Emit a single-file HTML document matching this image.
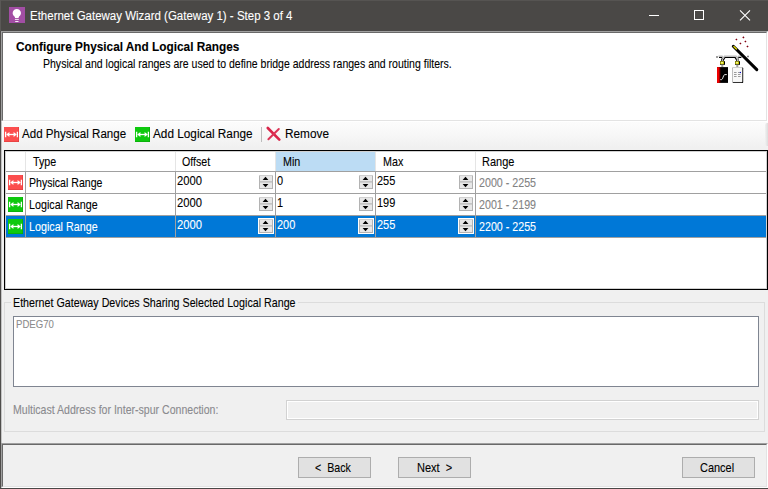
<!DOCTYPE html>
<html lang="en">
<head>
<meta charset="utf-8">
<title>Ethernet Gateway Wizard (Gateway 1) - Step 3 of 4</title>
<style>
html,body{margin:0;padding:0;overflow:hidden;}
body{width:768px;height:489px;overflow:hidden;background:#f0f0f0;position:relative;
  font-family:"Liberation Sans",sans-serif;font-size:11px;color:#000;}
.a{position:absolute;white-space:pre;line-height:1;}
.t{transform-origin:0 0;-webkit-text-stroke:0.1px currentColor;}
.b{position:absolute;box-sizing:border-box;}
.btn{background:#e1e1e1;border:1px solid #adadad;width:73px;height:21px;top:457px;}
</style>
</head>
<body>
<div class="b" style="left:0;top:0;width:768px;height:31px;background:#4a4846"></div>
<div class="b" style="left:0;top:0;width:768px;height:1px;background:#565452"></div>
<div class="b" style="left:0;top:0;width:1px;height:31px;background:#5a5856"></div>
<div class="b" style="left:0;top:31px;width:1px;height:458px;background:#4f4d4b"></div>
<div class="b" style="left:1px;top:31px;width:1px;height:457px;background:#c4c4c4"></div>
<div class="b" style="left:0;top:488px;width:768px;height:1px;background:#4a4846"></div>
<svg class="a" style="left:9px;top:7px" width="16" height="16" viewBox="0 0 16 16">
<rect width="16" height="16" fill="#a24ea4"/>
<path d="M7.800 1.900a4.100 4.100 0 0 0-2.300 7.500c.4.400.5.900.5 1.500h3.600c0-.6.100-1.100.5-1.500A4.100 4.100 0 0 0 7.800 1.900z" fill="#fff"/>
<rect x="5.900" y="11.900" width="3.900" height="0.900" fill="#fff"/>
<rect x="6.200" y="14" width="3.300" height="0.900" fill="#fff"/>
</svg>
<svg class="a" style="left:640px;top:0" width="128" height="31" viewBox="0 0 128 31">
<path d="M9 15.500h10" stroke="#fff" stroke-width="1" fill="none"/>
<rect x="54.500" y="10.500" width="9" height="9" stroke="#fff" stroke-width="1" fill="none"/>
<path d="M100 10.300l10 10M110 10.300l-10 10" stroke="#fff" stroke-width="1.100" fill="none"/>
</svg>
<div class="b" style="left:1px;top:31px;width:767px;height:91px;background:#fff;border-style:solid;border-width:1px;border-color:#a0a0a0 #fff #fff #a0a0a0"></div>
<div class="b" style="left:2px;top:32px;width:765px;height:89px;background:#fff;border-style:solid;border-width:1px;border-color:#696969 #e3e3e3 #e3e3e3 #696969"></div>
<svg class="a" style="left:712px;top:34px" width="48" height="52" viewBox="712 34 48 52">
<g fill="#800010">
<path d="M736.400 38.400l1.100 1.100l-1.100 1.100l-1.100-1.100z"/>
<path d="M743.400 36.300l1.100 1.100l-1.100 1.100l-1.100-1.100z"/>
<path d="M745.400 40.400l1.100 1.100l-1.100 1.100l-1.100-1.100z"/>
<path d="M740.400 42.400l1.100 1.100l-1.100 1.100l-1.100-1.100z"/>
<path d="M747.500 45.400l1.100 1.100l-1.100 1.100l-1.100-1.100z"/>
</g>
<path d="M716.500 57h1M719 57.400h2.600l1.700 2.600l1.700-2.600h10l1.700 2.600l1.700-2.600h3M747.500 56.500h1" stroke="#000" stroke-width="1.300" fill="none" stroke-linejoin="round"/>
<path d="M718.500 56.100h3.700l1.100 2.300l1.100-2.300h11.800l1.100 2.300l1.100-2.300h3.500" stroke="#bcbcbc" stroke-width="1.200" fill="none"/>
<path d="M722.300 59v2.500M737.300 59v2.500" stroke="#000" stroke-width="2.400"/>
<path d="M722.300 58.500v3M737.300 58.500v3" stroke="#e0e0e0" stroke-width="1"/>
<rect x="720" y="61.200" width="5" height="3.600" fill="#000"/>
<rect x="735" y="61.200" width="5" height="3.600" fill="#000"/>
<rect x="720.300" y="61.400" width="3.600" height="2.800" fill="#d8d800"/>
<rect x="735.300" y="61.400" width="3.600" height="2.800" fill="#d8d800"/>
<rect x="721.300" y="62" width="1.400" height="1.400" fill="#ffffc0"/>
<rect x="736.300" y="62" width="1.400" height="1.400" fill="#ffffc0"/>
<rect x="721.300" y="64.800" width="2" height="2.400" fill="#a0a0a0"/>
<rect x="736.300" y="64.800" width="2" height="2.400" fill="#a0a0a0"/>
<rect x="717" y="67.100" width="11" height="15.800" fill="#000"/>
<rect x="717" y="67.100" width="2.700" height="15.800" fill="#f00000"/>
<rect x="719.500" y="67.100" width="0.800" height="15.800" fill="#800000"/>
<path d="M720.300 79.600h1.300c1.500 0 1.500-5 3.200-5h2" stroke="#fff" stroke-width="0.900" fill="none"/>
<rect x="732.600" y="67.500" width="10.600" height="15.600" rx="0.800" fill="#000"/>
<rect x="732.200" y="67.100" width="10.200" height="15.200" rx="0.800" fill="#c8c8c8"/>
<rect x="733" y="67.900" width="9" height="14" fill="#f8f8f8"/>
<g fill="#909090">
<rect x="734" y="72" width="2.600" height="0.900"/><rect x="738" y="72" width="1.800" height="0.900"/>
<rect x="734" y="74" width="2.600" height="0.900"/><rect x="738" y="74" width="2.600" height="0.900"/>
<rect x="734" y="76" width="2.600" height="0.900"/><rect x="738" y="76" width="2.600" height="0.900"/>
</g>
<rect x="739.800" y="71.900" width="1.200" height="1.200" fill="#1010c0"/>
<path d="M733.300 46.300L756.800 69.600" stroke="#000" stroke-width="3" stroke-linecap="round"/>
<path d="M733.800 46.600L736.400 49" stroke="#e8e000" stroke-width="1.300" stroke-linecap="round"/>
</svg>
<div class="b" style="left:2px;top:122px;width:766px;height:26px;background:linear-gradient(#fcfcfc,#f8f8f8 40%,#f0f0f0)"></div>
<div class="b" style="left:765px;top:123px;width:3px;height:23px;background:linear-gradient(90deg,#f2f2f2,#dcdcdc);border-radius:2px 0 0 2px"></div>
<svg class="a" style="left:4px;top:127px" width="15" height="15" viewBox="0 0 15 15"><rect width="15" height="15" fill="#fc4e4e"/><path d="M0 14.500h15M14.500 0v15" stroke="#d83a3a" stroke-width="1" fill="none" opacity="0.55"/><path d="M1.600 4.800v5.400M13.400 4.800v5.400" stroke="#fff" stroke-width="1.300" fill="none"/><path d="M4 7.500h7" stroke="#fff" stroke-width="1.300" fill="none"/><path d="M2.200 7.500L5.400 4.900v5.200zM12.800 7.500L9.600 4.900v5.200z" fill="#fff"/></svg>
<svg class="a" style="left:135px;top:127px" width="15" height="15" viewBox="0 0 15 15"><rect width="15" height="15" fill="#0ec90e"/><path d="M0 14.500h15M14.500 0v15" stroke="#0a9e0a" stroke-width="1" fill="none" opacity="0.55"/><path d="M1.600 4.800v5.400M13.400 4.800v5.400" stroke="#fff" stroke-width="1.300" fill="none"/><path d="M4 7.500h7" stroke="#fff" stroke-width="1.300" fill="none"/><path d="M2.200 7.500L5.400 4.900v5.200zM12.800 7.500L9.600 4.900v5.200z" fill="#fff"/></svg>
<div class="b" style="left:261px;top:127px;width:1px;height:15px;background:#bdbdbd"></div>
<svg class="a" style="left:266px;top:126px" width="16" height="16" viewBox="0 0 16 16"><path d="M1.800 2L13.300 13.600" stroke="#d9264a" stroke-width="2.600" stroke-linecap="round" fill="none"/><path d="M12.800 3L2.400 13.300" stroke="#dc3557" stroke-width="2" stroke-linecap="round" fill="none"/></svg>
<div class="b" style="left:4px;top:150px;width:764px;height:140px;background:#fff;border:1px solid #000;box-shadow:inset 0 0 0 1px rgba(0,0,0,0.18)"></div>
<div class="b" style="left:276px;top:152px;width:100px;height:19px;background:#bcdcf4"></div>
<div class="b" style="left:25px;top:152px;width:1px;height:19px;background:#e5e5e5"></div>
<div class="b" style="left:175px;top:152px;width:1px;height:19px;background:#e5e5e5"></div>
<div class="b" style="left:275px;top:152px;width:1px;height:19px;background:#e5e5e5"></div>
<div class="b" style="left:375px;top:152px;width:1px;height:19px;background:#e5e5e5"></div>
<div class="b" style="left:475px;top:152px;width:1px;height:19px;background:#e5e5e5"></div>
<div class="b" style="left:6px;top:216px;width:760px;height:21px;background:#0078d7"></div>
<div class="b" style="left:6px;top:171px;width:760px;height:1px;background:#a0a0a0"></div>
<div class="b" style="left:6px;top:193px;width:760px;height:1px;background:#a0a0a0"></div>
<div class="b" style="left:6px;top:215px;width:760px;height:1px;background:#a0a0a0"></div>
<div class="b" style="left:6px;top:237px;width:760px;height:1px;background:#a0a0a0"></div>
<div class="b" style="left:25px;top:172px;width:1px;height:66px;background:#a0a0a0"></div>
<div class="b" style="left:175px;top:172px;width:1px;height:66px;background:#a0a0a0"></div>
<div class="b" style="left:275px;top:172px;width:1px;height:66px;background:#a0a0a0"></div>
<div class="b" style="left:375px;top:172px;width:1px;height:66px;background:#a0a0a0"></div>
<div class="b" style="left:475px;top:172px;width:1px;height:66px;background:#a0a0a0"></div>
<svg class="a" style="left:8px;top:175px" width="15" height="15" viewBox="0 0 15 15"><rect width="15" height="15" fill="#fc4e4e"/><path d="M0 14.500h15M14.500 0v15" stroke="#d83a3a" stroke-width="1" fill="none" opacity="0.55"/><path d="M1.600 4.800v5.400M13.400 4.800v5.400" stroke="#fff" stroke-width="1.300" fill="none"/><path d="M4 7.500h7" stroke="#fff" stroke-width="1.300" fill="none"/><path d="M2.200 7.500L5.400 4.900v5.200zM12.800 7.500L9.600 4.900v5.200z" fill="#fff"/></svg>
<svg class="a" style="left:258px;top:174px" width="16" height="16" viewBox="0 0 16 16"><rect x="1" y="1" width="14" height="14" fill="#e7e7e7"/><path d="M1.500 1v14M14.500 1v14M1 14.500h14" stroke="#b2b2b2" stroke-width="1" fill="none"/><path d="M1 1.500h14" stroke="#cfcfcf" stroke-width="1" fill="none"/><path d="M1 7.900h14" stroke="#b6b6b6" stroke-width="1.200" fill="none"/><path d="M4.600 6h5.800l-2.900-3.200z" fill="#000"/><path d="M4.600 10h5.800l-2.900 3.200z" fill="#000"/></svg>
<svg class="a" style="left:358px;top:174px" width="16" height="16" viewBox="0 0 16 16"><rect x="1" y="1" width="14" height="14" fill="#e7e7e7"/><path d="M1.500 1v14M14.500 1v14M1 14.500h14" stroke="#b2b2b2" stroke-width="1" fill="none"/><path d="M1 1.500h14" stroke="#cfcfcf" stroke-width="1" fill="none"/><path d="M1 7.900h14" stroke="#b6b6b6" stroke-width="1.200" fill="none"/><path d="M4.600 6h5.800l-2.900-3.200z" fill="#000"/><path d="M4.600 10h5.800l-2.900 3.200z" fill="#000"/></svg>
<svg class="a" style="left:458px;top:174px" width="16" height="16" viewBox="0 0 16 16"><rect x="1" y="1" width="14" height="14" fill="#e7e7e7"/><path d="M1.500 1v14M14.500 1v14M1 14.500h14" stroke="#b2b2b2" stroke-width="1" fill="none"/><path d="M1 1.500h14" stroke="#cfcfcf" stroke-width="1" fill="none"/><path d="M1 7.900h14" stroke="#b6b6b6" stroke-width="1.200" fill="none"/><path d="M4.600 6h5.800l-2.900-3.200z" fill="#000"/><path d="M4.600 10h5.800l-2.900 3.200z" fill="#000"/></svg>
<svg class="a" style="left:8px;top:197px" width="15" height="15" viewBox="0 0 15 15"><rect width="15" height="15" fill="#0ec90e"/><path d="M0 14.500h15M14.500 0v15" stroke="#0a9e0a" stroke-width="1" fill="none" opacity="0.55"/><path d="M1.600 4.800v5.400M13.400 4.800v5.400" stroke="#fff" stroke-width="1.300" fill="none"/><path d="M4 7.500h7" stroke="#fff" stroke-width="1.300" fill="none"/><path d="M2.200 7.500L5.400 4.900v5.200zM12.800 7.500L9.600 4.900v5.200z" fill="#fff"/></svg>
<svg class="a" style="left:258px;top:196px" width="16" height="16" viewBox="0 0 16 16"><rect x="1" y="1" width="14" height="14" fill="#e7e7e7"/><path d="M1.500 1v14M14.500 1v14M1 14.500h14" stroke="#b2b2b2" stroke-width="1" fill="none"/><path d="M1 1.500h14" stroke="#cfcfcf" stroke-width="1" fill="none"/><path d="M1 7.900h14" stroke="#b6b6b6" stroke-width="1.200" fill="none"/><path d="M4.600 6h5.800l-2.900-3.200z" fill="#000"/><path d="M4.600 10h5.800l-2.900 3.200z" fill="#000"/></svg>
<svg class="a" style="left:358px;top:196px" width="16" height="16" viewBox="0 0 16 16"><rect x="1" y="1" width="14" height="14" fill="#e7e7e7"/><path d="M1.500 1v14M14.500 1v14M1 14.500h14" stroke="#b2b2b2" stroke-width="1" fill="none"/><path d="M1 1.500h14" stroke="#cfcfcf" stroke-width="1" fill="none"/><path d="M1 7.900h14" stroke="#b6b6b6" stroke-width="1.200" fill="none"/><path d="M4.600 6h5.800l-2.900-3.200z" fill="#000"/><path d="M4.600 10h5.800l-2.900 3.200z" fill="#000"/></svg>
<svg class="a" style="left:458px;top:196px" width="16" height="16" viewBox="0 0 16 16"><rect x="1" y="1" width="14" height="14" fill="#e7e7e7"/><path d="M1.500 1v14M14.500 1v14M1 14.500h14" stroke="#b2b2b2" stroke-width="1" fill="none"/><path d="M1 1.500h14" stroke="#cfcfcf" stroke-width="1" fill="none"/><path d="M1 7.900h14" stroke="#b6b6b6" stroke-width="1.200" fill="none"/><path d="M4.600 6h5.800l-2.900-3.200z" fill="#000"/><path d="M4.600 10h5.800l-2.900 3.200z" fill="#000"/></svg>
<svg class="a" style="left:8px;top:219px" width="15" height="15" viewBox="0 0 15 15"><rect width="15" height="15" fill="#0ec90e"/><path d="M0 14.500h15M14.500 0v15" stroke="#0a9e0a" stroke-width="1" fill="none" opacity="0.55"/><path d="M1.600 4.800v5.400M13.400 4.800v5.400" stroke="#fff" stroke-width="1.300" fill="none"/><path d="M4 7.500h7" stroke="#fff" stroke-width="1.300" fill="none"/><path d="M2.200 7.500L5.400 4.900v5.200zM12.800 7.500L9.600 4.900v5.200z" fill="#fff"/></svg>
<svg class="a" style="left:258px;top:218px" width="16" height="16" viewBox="0 0 16 16"><rect x="0" y="0" width="16" height="16" fill="#fff"/><rect x="1" y="1" width="14" height="14" fill="#e7e7e7"/><path d="M1.500 1v14M14.500 1v14M1 14.500h14" stroke="#b2b2b2" stroke-width="1" fill="none"/><path d="M1 1.500h14" stroke="#cfcfcf" stroke-width="1" fill="none"/><path d="M1 7.900h14" stroke="#b6b6b6" stroke-width="1.200" fill="none"/><path d="M4.600 6h5.800l-2.900-3.200z" fill="#000"/><path d="M4.600 10h5.800l-2.900 3.200z" fill="#000"/></svg>
<svg class="a" style="left:358px;top:218px" width="16" height="16" viewBox="0 0 16 16"><rect x="0" y="0" width="16" height="16" fill="#fff"/><rect x="1" y="1" width="14" height="14" fill="#e7e7e7"/><path d="M1.500 1v14M14.500 1v14M1 14.500h14" stroke="#b2b2b2" stroke-width="1" fill="none"/><path d="M1 1.500h14" stroke="#cfcfcf" stroke-width="1" fill="none"/><path d="M1 7.900h14" stroke="#b6b6b6" stroke-width="1.200" fill="none"/><path d="M4.600 6h5.800l-2.900-3.200z" fill="#000"/><path d="M4.600 10h5.800l-2.900 3.200z" fill="#000"/></svg>
<svg class="a" style="left:458px;top:218px" width="16" height="16" viewBox="0 0 16 16"><rect x="0" y="0" width="16" height="16" fill="#fff"/><rect x="1" y="1" width="14" height="14" fill="#e7e7e7"/><path d="M1.500 1v14M14.500 1v14M1 14.500h14" stroke="#b2b2b2" stroke-width="1" fill="none"/><path d="M1 1.500h14" stroke="#cfcfcf" stroke-width="1" fill="none"/><path d="M1 7.900h14" stroke="#b6b6b6" stroke-width="1.200" fill="none"/><path d="M4.600 6h5.800l-2.900-3.200z" fill="#000"/><path d="M4.600 10h5.800l-2.900 3.200z" fill="#000"/></svg>
<div class="b" style="left:4px;top:302px;width:761px;height:130px;border:1px solid #dcdcdc"></div>
<div class="b" style="left:11px;top:300px;width:287px;height:6px;background:#f0f0f0"></div>
<div class="b" style="left:13px;top:316px;width:746px;height:71px;background:#fff;border:1px solid #7f8591"></div>
<div class="b" style="left:286px;top:400px;width:473px;height:20px;background:#f0f0f0;border:1px solid #d2d2d2;box-shadow:inset 0 0 0 1px #fff"></div>
<div class="b" style="left:1px;top:443px;width:767px;height:45px;border-style:solid;border-width:1px;border-color:#a0a0a0 #fff #fff #a0a0a0"></div>
<div class="b" style="left:2px;top:444px;width:765px;height:43px;border-style:solid;border-width:1px;border-color:#696969 #e3e3e3 #e3e3e3 #696969"></div>
<div class="b btn" style="left:298px"></div>
<div class="b btn" style="left:398px"></div>
<div class="b btn" style="left:682px"></div>
<div class="a t" id="title" style="left:29.50px;top:10px;font-size:12px;color:#fff;transform:scaleX(0.9575)">Ethernet Gateway Wizard (Gateway 1) - Step 3 of 4</div>
<div class="a t" id="h1" style="left:16.00px;top:41px;font-size:12.2px;color:#000;transform:scaleX(0.9692);font-weight:bold">Configure Physical And Logical Ranges</div>
<div class="a t" id="h2" style="left:43.49px;top:58px;font-size:12.4px;color:#000;transform:scaleX(0.8490)">Physical and logical ranges are used to define bridge address ranges and routing filters.</div>
<div class="a t" id="tb1" style="left:21.72px;top:128px;font-size:12px;color:#000;transform:scaleX(0.9636)">Add Physical Range</div>
<div class="a t" id="tb2" style="left:152.82px;top:128px;font-size:12px;color:#000;transform:scaleX(0.9815)">Add Logical Range</div>
<div class="a t" id="tb3" style="left:284.57px;top:128px;font-size:12px;color:#000;transform:scaleX(0.9842)">Remove</div>
<div class="a t" id="c0" style="left:32.91px;top:156px;font-size:12.4px;color:#000;transform:scaleX(0.8650)">Type</div>
<div class="a t" id="c1" style="left:181.90px;top:156px;font-size:12.4px;color:#000;transform:scaleX(0.8597)">Offset</div>
<div class="a t" id="c2" style="left:282.68px;top:156px;font-size:12.4px;color:#000;transform:scaleX(0.8650)">Min</div>
<div class="a t" id="c3" style="left:382.68px;top:156px;font-size:12.4px;color:#000;transform:scaleX(0.8650)">Max</div>
<div class="a t" id="c4" style="left:482.26px;top:156px;font-size:12.4px;color:#000;transform:scaleX(0.8864)">Range</div>
<div class="a t" id="grp" style="left:12.78px;top:297px;font-size:12.4px;color:#000;transform:scaleX(0.8637)">Ethernet Gateway Devices Sharing Selected Logical Range</div>
<div class="a t" id="pdeg" style="left:15.99px;top:319px;font-size:10.8px;color:#8c8c8c;transform:scaleX(0.8888)">PDEG70</div>
<div class="a t" id="mc" style="left:12.69px;top:404px;font-size:12.4px;color:#8a8a8e;transform:scaleX(0.8520)">Multicast Address for Inter-spur Connection:</div>
<div class="a t" id="b1" style="left:315.40px;top:462px;font-size:12.4px;color:#000;transform:scaleX(0.8595)">&lt;  Back</div>
<div class="a t" id="b2" style="left:416.65px;top:462px;font-size:12.4px;color:#000;transform:scaleX(0.8897)">Next  &gt;</div>
<div class="a t" id="b3" style="left:699.76px;top:462px;font-size:12.4px;color:#000;transform:scaleX(0.8847)">Cancel</div>
<div class="a t" id="r0t" style="left:28.89px;top:177px;font-size:12.4px;color:#000;transform:scaleX(0.8524)">Physical Range</div>
<div class="a t" id="r0n0" style="left:177.25px;top:175px;font-size:12.4px;color:#000;transform:scaleX(0.9050)">2000</div>
<div class="a t" id="r0n1" style="left:277.30px;top:175px;font-size:12.4px;color:#000;transform:scaleX(0.8850)">0</div>
<div class="a t" id="r0n2" style="left:376.57px;top:175px;font-size:12.4px;color:#000;transform:scaleX(0.8850)">255</div>
<div class="a t" id="r0r" style="left:478.68px;top:177px;font-size:12.4px;color:#828282;transform:scaleX(0.8622)">2000 - 2255</div>
<div class="a t" id="r1t" style="left:28.87px;top:199px;font-size:12.4px;color:#000;transform:scaleX(0.8660)">Logical Range</div>
<div class="a t" id="r1n0" style="left:177.25px;top:197px;font-size:12.4px;color:#000;transform:scaleX(0.9050)">2000</div>
<div class="a t" id="r1n1" style="left:277.08px;top:197px;font-size:12.4px;color:#000;transform:scaleX(0.8850)">1</div>
<div class="a t" id="r1n2" style="left:377.08px;top:197px;font-size:12.4px;color:#000;transform:scaleX(0.8850)">199</div>
<div class="a t" id="r1r" style="left:478.68px;top:199px;font-size:12.4px;color:#828282;transform:scaleX(0.8623)">2001 - 2199</div>
<div class="a t" id="r2t" style="left:28.87px;top:221px;font-size:12.4px;color:#fff;transform:scaleX(0.8660)">Logical Range</div>
<div class="a t" id="r2n0" style="left:177.25px;top:219px;font-size:12.4px;color:#fff;transform:scaleX(0.9050)">2000</div>
<div class="a t" id="r2n1" style="left:276.57px;top:219px;font-size:12.4px;color:#fff;transform:scaleX(0.8850)">200</div>
<div class="a t" id="r2n2" style="left:376.57px;top:219px;font-size:12.4px;color:#fff;transform:scaleX(0.8850)">255</div>
<div class="a t" id="r2r" style="left:478.68px;top:221px;font-size:12.4px;color:#fff;transform:scaleX(0.8622)">2200 - 2255</div>
</body>
</html>
